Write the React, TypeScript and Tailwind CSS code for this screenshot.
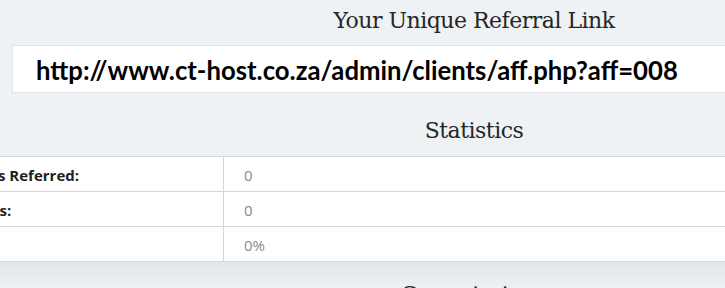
import React from 'react';

const stats = [
  { label: 'Visitors Referred:', value: '0' },
  { label: 'Signups:', value: '0' },
  { label: 'Rate:', value: '0%' },
];

export default function App() {
  return (
    <div className="w-[725px] h-[288px] overflow-hidden bg-[#eef2f5]">
      <div className="ml-[12px] w-[924px]">
        {/* Referral link */}
        <h2 className="pt-[6px] text-center text-[22px] leading-[30px] text-[#262626] font-['DejaVu_Serif',serif] tracking-[-0.5px]">
          Your Unique Referral Link
        </h2>
        <div className="mt-[9px] h-[48px] bg-white border border-[#e1e5e8] flex items-center pl-[23px] pt-[3px]">
          <span className="text-[25.7px] font-bold text-black font-['Lato',sans-serif]">
            http://www.ct-host.co.za/admin/clients/aff.php?aff=008
          </span>
        </div>

        {/* Statistics */}
        <h2 className="mt-[23px] text-center text-[22px] leading-[30px] text-[#262626] font-['DejaVu_Serif',serif] tracking-[-0.5px]">
          Statistics
        </h2>
      </div>

      <div className="mt-[10px] ml-[-60px] w-[1000px] bg-white border-t border-[#d4d7d9] font-['Open_Sans',sans-serif]">
        {stats.map((s) => (
          <div key={s.label} className="flex h-[35px] border-b border-[#d4d7d9]">
            <div className="w-[284px] shrink-0 border-r border-[#d4d7d9] pl-[9px] pt-[2px] flex items-center text-[15px] font-bold text-[#1e1e1e]">
              {s.label}
            </div>
            <div className="pl-[20px] pt-[2px] flex items-center text-[15px] text-[#8a8a8a]">{s.value}</div>
          </div>
        ))}
      </div>

      <div className="h-[30px] bg-gradient-to-b from-[#e4e7ea] to-[#eef2f5]">
        <h2 className="ml-[12px] w-[924px] pt-[18px] text-center text-[22px] leading-[30px] text-[#2e2e2e] font-['DejaVu_Serif',serif]">
          Commissions
        </h2>
      </div>
    </div>
  );
}
